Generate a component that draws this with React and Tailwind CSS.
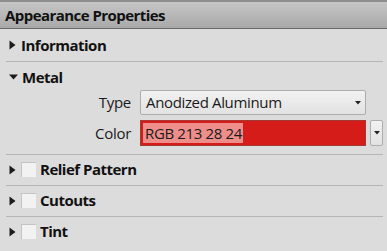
import React from "react";

const font = { fontFamily: '"Open Sans", "Noto Sans", sans-serif' };

function TriRight() {
  return (
    <svg width="7" height="10" viewBox="0 0 7 10" className="shrink-0">
      <path d="M0.5 0.5 L6.5 5 L0.5 9.5 Z" fill="#1c1c1c" />
    </svg>
  );
}
function TriDown() {
  return (
    <svg width="9" height="6" viewBox="0 0 9 6" className="shrink-0">
      <path d="M0 0.5 L9 0.5 L4.5 5.5 Z" fill="#1c1c1c" />
    </svg>
  );
}
function SmallArrow() {
  return (
    <svg width="6" height="4" viewBox="0 0 6 4">
      <path d="M0 0 L6 0 L3 3.5 Z" fill="#222" />
    </svg>
  );
}

function Sep() {
  return <div className="h-px bg-[#b6b6b6] ml-[6px] mr-[4px]" />;
}

function CheckRow({ label }) {
  return (
    <div className="h-[30px] flex items-center pl-[9px] pb-[1px]">
      <TriRight />
      <div className="ml-[5px] w-[15px] h-[15px] bg-[#f2f2f2] border-l border-t border-[#c4c4c4]" />
      <span className="ml-[4px] text-[15px] font-bold text-[#111] leading-none tracking-[-0.5px]">{label}</span>
    </div>
  );
}

export default function App() {
  return (
    <div className="w-[387px] h-[251px] bg-[#dcdcdc] overflow-hidden flex flex-col" style={font}>
      <div className="h-[29px] shrink-0 border-t-2 border-t-[#8e8e8e] border-b border-b-[#6b6b6b] bg-gradient-to-b from-[#c6c6c6] to-[#a9a9a9] flex items-center pl-[5px]">
        <span className="text-[15px] font-bold text-[#111] tracking-[-0.55px] leading-none">Appearance Properties</span>
      </div>
      <div className="h-[32px] shrink-0 flex items-center pl-[9px]">
        <TriRight />
        <span className="ml-[5px] text-[15px] font-bold text-[#111] leading-none tracking-[-0.5px]">Information</span>
      </div>
      <Sep />
      <div className="flex flex-col pb-[8px]">
        <div className="h-[28px] flex items-center pl-[9px] pt-[2px]">
          <TriDown />
          <span className="ml-[4px] text-[15px] font-bold text-[#111] leading-none tracking-[-0.5px]">Metal</span>
        </div>
        <div className="flex items-center h-[25px]">
          <span className="w-[131px] text-right text-[15px] text-[#1a1a1a] leading-none tracking-[-0.3px]">Type</span>
          <div className="ml-[9px] w-[226px] h-[25px] rounded-[2px] border border-[#adadad] bg-gradient-to-b from-[#f2f2f2] to-[#e2e2e2] flex items-center pl-[5px] pr-[4px]">
            <span className="flex-1 text-[15px] text-[#1a1a1a] leading-none tracking-[-0.35px]">Anodized Aluminum</span>
            <SmallArrow />
          </div>
        </div>
        <div className="flex items-center h-[26px] mt-[5px]">
          <span className="w-[131px] text-right text-[15px] text-[#1a1a1a] leading-none tracking-[-0.3px]">Color</span>
          <div className="ml-[9px] w-[226px] h-[26px] border border-[#a33a36] bg-[#d51c18] flex items-center pl-[2px]">
            <span className="h-[20px] bg-[#ee8e8b] text-[15px] text-[#1a1a1a] leading-[20px] pl-[2px] pr-[1px] tracking-[-0.35px]">RGB 213 28 24</span>
          </div>
          <div className="ml-[4px] w-[13px] h-[26px] rounded-[2px] border border-[#adadad] bg-gradient-to-b from-[#f2f2f2] to-[#e2e2e2] flex items-center justify-center">
            <SmallArrow />
          </div>
        </div>
      </div>
      <Sep />
      <CheckRow label="Relief Pattern" />
      <Sep />
      <CheckRow label="Cutouts" />
      <Sep />
      <CheckRow label="Tint" />
    </div>
  );
}
